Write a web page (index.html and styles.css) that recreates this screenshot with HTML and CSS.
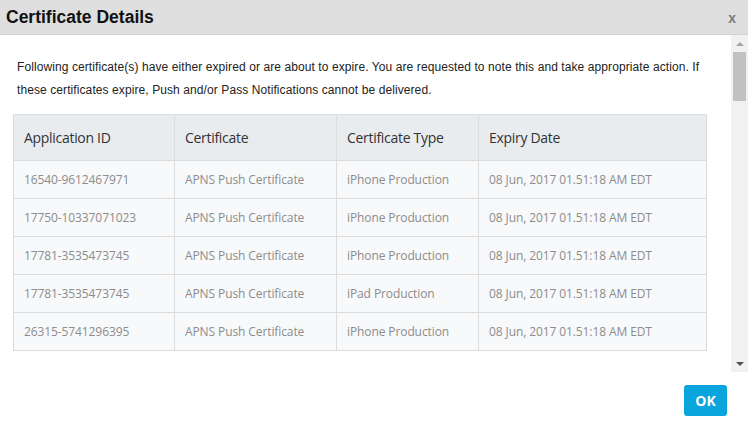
FILE: index.html
```html
<!DOCTYPE html>
<html>
<head>
<meta charset="utf-8">
<link rel="stylesheet" href="styles.css">
</head>
<body>
<div class="dialog">
  <div class="header">
    <div class="title">Certificate Details</div>
    <div class="close">x</div>
  </div>
  <div class="main">
    <div class="content">
      <p class="intro">Following certificate(s) have either expired or are about to expire. You are requested to note this and take appropriate action. If these certificates expire, Push and/or Pass Notifications cannot be delivered.</p>
      <table class="certs">
        <colgroup>
          <col class="c1"><col class="c2"><col class="c3"><col class="c4">
        </colgroup>
        <thead>
          <tr><th>Application ID</th><th>Certificate</th><th>Certificate Type</th><th>Expiry Date</th></tr>
        </thead>
        <tbody>
          <tr><td>16540-9612467971</td><td>APNS Push Certificate</td><td>iPhone Production</td><td>08 Jun, 2017 01.51:18 AM EDT</td></tr>
          <tr><td>17750-10337071023</td><td>APNS Push Certificate</td><td>iPhone Production</td><td>08 Jun, 2017 01.51:18 AM EDT</td></tr>
          <tr><td>17781-3535473745</td><td>APNS Push Certificate</td><td>iPhone Production</td><td>08 Jun, 2017 01.51:18 AM EDT</td></tr>
          <tr><td>17781-3535473745</td><td>APNS Push Certificate</td><td>iPad Production</td><td>08 Jun, 2017 01.51:18 AM EDT</td></tr>
          <tr><td>26315-5741296395</td><td>APNS Push Certificate</td><td>iPhone Production</td><td>08 Jun, 2017 01.51:18 AM EDT</td></tr>
        </tbody>
      </table>
    </div>
    <div class="scrollbar">
      <div class="arrow up"></div>
      <div class="track"><div class="thumb"></div></div>
      <div class="arrow down"></div>
    </div>
  </div>
  <div class="footer">
    <button class="ok">OK</button>
  </div>
</div>
</body>
</html>
```

FILE: styles.css
```css
html, body {
  margin: 0;
  padding: 0;
  background: #ffffff;
}
.dialog {
  width: 748px;
  height: 422px;
  display: flex;
  flex-direction: column;
  font-family: "Liberation Sans", Arial, sans-serif;
}
.header {
  height: 34px;
  flex: none;
  background: #dfdfdf;
  border-bottom: 1px solid #d2d2d2;
  display: flex;
  align-items: center;
  justify-content: space-between;
  padding: 0 12px 0 6px;
}
.title {
  font-size: 17.5px;
  font-weight: bold;
  color: #111;
}
.close {
  font-size: 14px;
  font-weight: bold;
  color: #7a7a7a;
  margin-top: 2px;
}
.main {
  height: 337px;
  flex: none;
  display: flex;
}
.content {
  flex: 1;
  overflow: hidden;
  padding: 21px 24px 0 13px;
}
.intro {
  margin: 0 0 12px 4px;
  font-size: 12px;
  line-height: 23px;
  letter-spacing: 0.09px;
  color: #222;
}
.certs {
  width: 693px;
  border-collapse: collapse;
  font-family: "Open Sans", sans-serif;
  table-layout: fixed;
}
.c1 { width: 161px; }
.c2 { width: 162px; }
.c3 { width: 142px; }
.c4 { width: 228px; }
.certs th, .certs td {
  border: 1px solid #dcdcdc;
  text-align: left;
  padding: 0 0 0 10px;
  white-space: nowrap;
}
.certs th {
  height: 45px;
  background: #e9ecef;
  font-weight: normal;
  font-size: 14px;
  letter-spacing: -0.3px;
  color: #333;
}
.certs td {
  height: 37px;
  background: #f8f9fa;
  font-size: 12px;
  letter-spacing: -0.1px;
  color: #8c8c8c;
}
.scrollbar {
  width: 17px;
  flex: none;
  background: #f1f1f1;
  display: flex;
  flex-direction: column;
}
.arrow {
  height: 17px;
  flex: none;
  display: flex;
  align-items: center;
  justify-content: center;
}
.arrow.up::before {
  content: "";
  border-left: 4px solid transparent;
  border-right: 4px solid transparent;
  border-bottom: 4px solid #a3a3a3;
}
.arrow.down::before {
  content: "";
  border-left: 4px solid transparent;
  border-right: 4px solid transparent;
  border-top: 4px solid #505050;
}
.track {
  flex: 1;
  padding: 0 2px;
}
.thumb {
  height: 49px;
  background: #c1c1c1;
}
.footer {
  flex: 1;
  display: flex;
  justify-content: flex-end;
  align-items: flex-start;
  padding: 13px 21px 0 0;
}
.ok {
  width: 43px;
  height: 31px;
  border: none;
  border-radius: 3px;
  background: #0aa5dc;
  color: #fff;
  font-family: "Open Sans", sans-serif;
  font-weight: bold;
  font-size: 14px;
  padding: 0;
}
```
